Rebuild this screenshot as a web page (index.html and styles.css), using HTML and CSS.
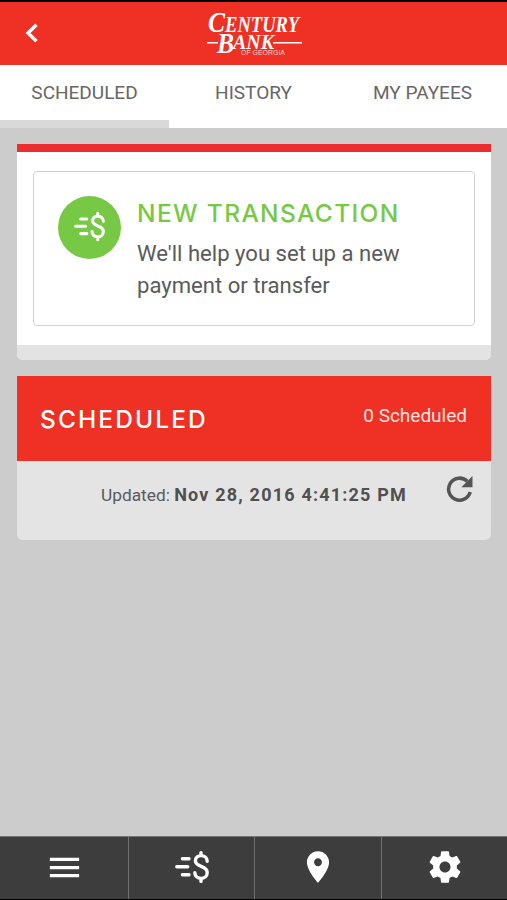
FILE: index.html
```html
<!DOCTYPE html>
<html lang="en">
<head>
    <meta charset="UTF-8">
    <meta name="viewport" content="width=device-width, initial-scale=1.0">
    <title>Century Bank of Georgia</title>
    <link rel="stylesheet" href="styles.css">
</head>
<body>
    <!-- Shared icons -->
    <svg class="icon-defs">
        <symbol id="icon-money" viewBox="0 0 34 34">
            <g fill="none" stroke="currentColor" stroke-width="3.4" stroke-linecap="round">
                <path d="M7.400 8.800H14M1.800 16.800H12.800M7.400 24.800H14"/>
                <path d="M32.200 11.200C32.200 7.400 29.200 5.600 26 5.600S20.400 7.600 20.400 10.800C20.400 17.800 32.200 15 32.200 22.400C32.200 26 29.400 28.400 26 28.400S19.800 26.200 19.800 22.600M26 2.600V5.400M26 28.600V31.400"/>
            </g>
        </symbol>
    </svg>

    <header class="header">
        <a class="back" href="#" aria-label="Back">
            <svg width="14" height="20" viewBox="0 0 14 20"><path d="M11.500 1.800L3 10l8.500 8.200" fill="none" stroke="#fff" stroke-width="3.500"/></svg>
        </a>
        <svg class="logo" width="98" height="50" viewBox="0 0 98 50">
            <g class="logo-name">
                <text x="1" y="22.500" font-size="30" textLength="17" lengthAdjust="spacingAndGlyphs">C</text>
                <text x="18" y="22.500" font-size="23" textLength="74" lengthAdjust="spacingAndGlyphs">ENTURY</text>
                <text x="10" y="43.500" font-size="30" textLength="17" lengthAdjust="spacingAndGlyphs">B</text>
                <text x="26" y="39.500" font-size="22" textLength="41" lengthAdjust="spacingAndGlyphs">ANK</text>
            </g>
            <path d="M0 33.700h11M66 33.700h29" stroke="#fff" stroke-width="1.500"/>
            <text class="logo-state" x="34" y="46" textLength="44" lengthAdjust="spacingAndGlyphs">OF GEORGIA</text>
        </svg>
    </header>

    <nav class="tabs">
        <a class="tab active" href="#">SCHEDULED</a>
        <a class="tab" href="#">HISTORY</a>
        <a class="tab" href="#">MY PAYEES</a>
    </nav>

    <main class="content">
        <section class="card">
            <div class="card-body">
                <a class="new-transaction" href="#">
                    <span class="circle"><svg class="circle-icon"><use href="#icon-money"/></svg></span>
                    <div class="new-text">
                        <h2>NEW TRANSACTION</h2>
                        <p>We'll help you set up a new<br>payment or transfer</p>
                    </div>
                </a>
            </div>
            <div class="card-footer"></div>
        </section>

        <section class="card-scheduled">
            <div class="scheduled-header">
                <h2>SCHEDULED</h2>
                <span class="count">0 Scheduled</span>
            </div>
            <div class="updated">
                <p>Updated: <strong>Nov 28, 2016 4:41:25 PM</strong></p>
                <svg class="refresh" width="28" height="28" viewBox="0 0 28 28">
                    <path d="M21.200 6.200A11 11 0 1 0 24.200 17" fill="none" stroke="#555" stroke-width="3.500"/>
                    <path d="M26.500 1v11.200H15.300z" fill="#555"/>
                </svg>
            </div>
        </section>
    </main>

    <footer class="toolbar">
        <a href="#" aria-label="Menu">
            <svg width="39" height="39" viewBox="0 0 24 24"><path d="M3 18h18v-2H3v2zm0-5h18v-2H3v2zm0-7v2h18V6H3z"/></svg>
        </a>
        <a href="#" aria-label="Transactions">
            <svg width="34" height="34"><use href="#icon-money"/></svg>
        </a>
        <a href="#" aria-label="Locations">
            <svg width="38" height="38" viewBox="0 0 24 24"><path d="M12 2C8.130 2 5 5.130 5 9c0 5.250 7 13 7 13s7-7.750 7-13c0-3.870-3.130-7-7-7zm0 9.500c-1.380 0-2.500-1.120-2.500-2.500s1.120-2.500 2.500-2.500 2.500 1.120 2.500 2.500-1.120 2.500-2.500 2.500z"/></svg>
        </a>
        <a href="#" aria-label="Settings">
            <svg width="38" height="38" viewBox="0 0 24 24"><path d="M19.430 12.980c.04-.32.07-.64.07-.98s-.03-.66-.07-.98l2.110-1.650c.19-.15.24-.42.12-.64l-2-3.460c-.12-.22-.39-.3-.61-.22l-2.490 1c-.52-.4-1.080-.73-1.690-.98l-.38-2.650C14.460 2.180 14.250 2 14 2h-4c-.25 0-.46.18-.49.42l-.38 2.650c-.61.25-1.170.59-1.690.98l-2.490-1c-.23-.09-.49 0-.61.22l-2 3.460c-.13.22-.07.49.12.64l2.110 1.650c-.04.32-.07.65-.07.98s.03.66.07.98l-2.110 1.650c-.19.15-.24.42-.12.64l2 3.460c.12.22.39.3.61.22l2.490-1c.52.4 1.080.73 1.690.98l.38 2.650c.03.24.24.42.49.42h4c.25 0 .46-.18.49-.42l.38-2.650c.61-.25 1.170-.59 1.690-.98l2.490 1c.23.09.49 0 .61-.22l2-3.460c.12-.22.07-.49-.12-.64l-2.110-1.650zM12 15.500c-1.930 0-3.500-1.570-3.500-3.500s1.570-3.500 3.500-3.500 3.500 1.570 3.500 3.500-1.570 3.500-3.500 3.500z"/></svg>
        </a>
    </footer>
</body>
</html>
```
FILE: styles.css
```css
* {
    box-sizing: border-box;
}

body {
    margin: 0;
    height: 900px;
    display: flex;
    flex-direction: column;
    font-family: Roboto, sans-serif;
    background-color: #ccc;
    color: #5a5a5a;
}

h2, p {
    margin: 0;
}

a {
    color: inherit;
    text-decoration: none;
}

.icon-defs {
    display: none;
}

.header {
    display: grid;
    grid-template-columns: 1fr 98px 1fr;
    height: 65px;
    border-top: 2px solid #000;
    background-color: #ef3024;
}

.back {
    padding: 21px 0 0 25px;
}

.logo {
    margin: 7px 0 0 2px;
    overflow: visible;
}

.logo-name {
    font-family: "Liberation Serif", serif;
    font-style: italic;
    font-weight: bold;
    fill: #fff;
}

.logo-state {
    font-family: "Liberation Sans", sans-serif;
    font-size: 7px;
    fill: #ffd0cb;
}

.tabs {
    display: grid;
    grid-template-columns: repeat(3, 1fr);
    height: 63px;
    background-color: #fff;
}

.tab {
    padding-top: 16px;
    border-bottom: 8px solid transparent;
    font-size: 19px;
    line-height: 24px;
    text-align: center;
    color: #666;
}

.tab.active {
    border-bottom-color: #d9d9d9;
}

.content {
    flex: 1;
    padding: 16px 16px 0 17px;
}

.card {
    margin-bottom: 16px;
    border-top: 8px solid #eb2d30;
    border-radius: 0 0 6px 6px;
    overflow: hidden;
    background-color: #fff;
}

.card-body {
    padding: 19px 16px;
}

.new-transaction {
    display: flex;
    height: 155px;
    padding: 24px 23px 24px 24px;
    border: 1px solid #d2d2d2;
    border-radius: 4px;
}

.circle {
    display: flex;
    align-items: center;
    justify-content: center;
    width: 63px;
    height: 63px;
    margin-right: 16px;
    border-radius: 50%;
    background-color: #77c945;
    color: #fff;
}

.circle-icon {
    width: 31px;
    height: 31px;
    margin-bottom: 3px;
}

.new-text {
    white-space: nowrap;
}

.new-text h2 {
    padding-top: 1px;
    font-family: Inter, sans-serif;
    font-size: 24.5px;
    font-weight: 500;
    line-height: 32px;
    letter-spacing: 1.35px;
    color: #77c945;
}

.new-text p {
    padding-top: 8px;
    font-size: 22.1px;
    line-height: 32px;
}

.card-footer {
    height: 15px;
    background-color: #e3e3e3;
}

.card-scheduled {
    border-radius: 0 0 6px 6px;
    overflow: hidden;
    background-color: #e4e4e4;
}

.scheduled-header {
    display: flex;
    justify-content: space-between;
    height: 85px;
    padding: 26px 24px 0 23px;
    background-color: #ef3024;
    color: #fff;
}

.scheduled-header h2 {
    padding-top: 1px;
    font-family: Inter, sans-serif;
    font-size: 24.5px;
    font-weight: 500;
    line-height: 32px;
    letter-spacing: 2.1px;
}

.count {
    font-size: 19px;
    line-height: 27px;
    color: #ffe2df;
}

.updated {
    display: flex;
    justify-content: flex-end;
    height: 79px;
    padding: 14px 17px 0 0;
    font-size: 17.3px;
    line-height: 40px;
}

.updated strong {
    font-size: 18px;
    letter-spacing: 1.2px;
    color: #505050;
}

.refresh {
    margin-left: 39px;
}

.toolbar {
    display: grid;
    grid-template-columns: 129px 126px 127px 1fr;
    height: 64px;
    border-top: 1px solid #737373;
    border-bottom: 1px solid #000;
    background-color: #3d3d3d;
}

.toolbar a {
    display: flex;
    align-items: center;
    justify-content: center;
    padding-bottom: 2px;
    border-right: 1px solid #707070;
    color: #fff;
    fill: #fff;
}

.toolbar a:last-child {
    border-right: none;
}
```
